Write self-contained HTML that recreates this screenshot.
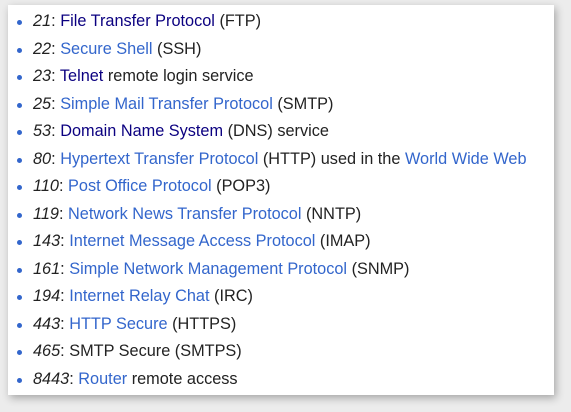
<!DOCTYPE html>
<html><head><style>
body{margin:0;width:571px;height:412px;background:#ececec;font-family:"Liberation Sans",sans-serif;overflow:hidden}
.box{position:absolute;left:8px;top:5px;width:546px;height:390px;background:#fff;box-shadow:2px 3px 8px rgba(0,0,0,.3)}
ul{margin:0;padding:0;position:absolute;left:25px;top:3px;list-style:none}
li{height:27.5px;line-height:27.5px;font-size:16.3px;color:#222;position:relative;white-space:nowrap}
li:before{content:"";position:absolute;left:-16px;top:12px;width:5px;height:5px;border-radius:50%;background:#36c}
a{color:#3366cc;text-decoration:none}
a.v{color:#0b0080}
i{color:#222}
</style></head><body><div class="box"><ul>
<li><i>21</i>: <a class="v">File Transfer Protocol</a> (FTP)</li>
<li><i>22</i>: <a>Secure Shell</a> (SSH)</li>
<li><i>23</i>: <a class="v">Telnet</a> remote login service</li>
<li><i>25</i>: <a>Simple Mail Transfer Protocol</a> (SMTP)</li>
<li><i>53</i>: <a class="v">Domain Name System</a> (DNS) service</li>
<li><i>80</i>: <a>Hypertext Transfer Protocol</a> (HTTP) used in the <a>World Wide Web</a></li>
<li><i>110</i>: <a>Post Office Protocol</a> (POP3)</li>
<li><i>119</i>: <a>Network News Transfer Protocol</a> (NNTP)</li>
<li><i>143</i>: <a>Internet Message Access Protocol</a> (IMAP)</li>
<li><i>161</i>: <a>Simple Network Management Protocol</a> (SNMP)</li>
<li><i>194</i>: <a>Internet Relay Chat</a> (IRC)</li>
<li><i>443</i>: <a>HTTP Secure</a> (HTTPS)</li>
<li><i>465</i>: SMTP Secure (SMTPS)</li>
<li><i>8443</i>: <a>Router</a> remote access</li>
</ul></div></body></html>
